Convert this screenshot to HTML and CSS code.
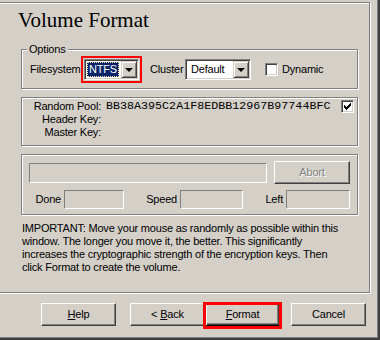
FILE: index.html
```html
<!DOCTYPE html>
<html>
<head>
<meta charset="utf-8">
<link rel="stylesheet" href="styles.css">
</head>
<body>
<div class="window">
  <div class="frame">
    <h1 class="title">Volume Format</h1>

    <div class="group options">
      <span class="legend">Options</span>
      <div class="opt-row">
        <span class="lbl lbl-fs">Filesystem</span>
        <span class="hl">
          <span class="combo combo-fs">
            <span class="combo-val sel"><span class="focus">NTFS</span></span>
            <span class="drop"><span class="tri"></span></span>
          </span>
        </span>
        <span class="lbl lbl-cl">Cluster</span>
        <span class="combo combo-cl">
          <span class="combo-val">Default</span>
          <span class="drop"><span class="tri"></span></span>
        </span>
        <span class="chk chk-dyn"></span>
        <span class="lbl lbl-dyn">Dynamic</span>
      </div>
    </div>

    <div class="group pool">
      <span class="k">Random Pool:</span>
      <span class="v">BB38A395C2A1F8EDBB12967B97744BFC</span>
      <span class="chk chk-on"><svg width="7" height="7" viewBox="0 0 7 7"><path d="M0 2h1v1h1v1h1V3h1V2h1V1h1V0h1v3H6v1H5v1H4v1H3v1H2V6H1V5H0z" fill="#000"/></svg></span>
      <span class="k">Header Key:</span>
      <span class="v"></span>
      <span></span>
      <span class="k">Master Key:</span>
      <span class="v"></span>
      <span></span>
    </div>

    <div class="group progress">
      <div class="prog-row">
        <span class="bar"></span>
        <span class="btn btn-abort"><span>Abort</span></span>
      </div>
      <div class="stat-row">
        <span class="slbl s1">Done</span><span class="field f1"></span>
        <span class="slbl s2">Speed</span><span class="field f2"></span>
        <span class="slbl s3">Left</span><span class="field f3"></span>
      </div>
    </div>

    <p class="note">IMPORTANT: Move your mouse as randomly as possible within this<br>window. The longer you move it, the better. This significantly<br>increases the cryptographic strength of the encryption keys. Then<br>click Format to create the volume.</p>
  </div>

  <div class="buttons">
    <span class="btn b-help"><span><u>H</u>elp</span></span>
    <span class="btn b-back"><span>&lt; <u>B</u>ack</span></span>
    <span class="hl hl-btn"><span class="btn b-format default"><span><u>F</u>ormat</span></span></span>
    <span class="btn b-cancel"><span>Cancel</span></span>
  </div>
</div>
</body>
</html>
```

FILE: styles.css
```css
html, body {
  margin: 0;
  padding: 0;
  background: #d4d0c8;
}
body {
  font-family: "Liberation Sans", Arial, sans-serif;
  font-size: 11px;
  line-height: 13px;
  letter-spacing: -0.2px;
  color: #000;
}
.window {
  width: 380px;
  height: 340px;
  overflow: hidden;
  box-sizing: border-box;
  box-shadow: inset -2px -2px 0 #404040, inset -3px -3px 0 #808080;
  display: flex;
  flex-direction: column;
}
.frame {
  margin: 2px 0 0 -2px;
  width: 372px;
  height: 291px;
  box-sizing: border-box;
  border: 1px solid #808080;
  box-shadow: inset 1px 1px 0 #fff, 1px 1px 0 #fff;
  display: flex;
  flex-direction: column;
  flex: none;
}
.title {
  margin: 5px 0 0 19px;
  font-family: "Liberation Serif", "Times New Roman", serif;
  font-weight: normal;
  font-size: 21px;
  line-height: 24px;
  height: 24px;
  letter-spacing: 0;
}
.group {
  position: relative;
  width: 337px;
  margin-left: 22px;
  box-sizing: border-box;
  border: 1px solid #808080;
  box-shadow: inset 1px 1px 0 #fff, 1px 1px 0 #fff;
  flex: none;
}
.legend {
  position: absolute;
  left: 5px;
  top: -7px;
  padding: 0 2px;
  background: #d4d0c8;
}
.options {
  margin-top: 17px;
  height: 40px;
  padding: 9px 0 0 8px;
}
.opt-row {
  display: flex;
  align-items: center;
  height: 21px;
}
.lbl-fs { width: 54px; }
.lbl-cl { width: 35px; margin-left: 11px; }
.lbl-dyn { margin-left: 4px; }
.hl {
  position: relative;
  display: block;
}
.hl::after {
  content: "";
  position: absolute;
  left: -3px;
  top: -3px;
  right: -3px;
  bottom: -3px;
  border: 2px solid #f00;
  pointer-events: none;
}
.combo {
  display: flex;
  box-sizing: border-box;
  height: 21px;
  background: #fff;
  border: 1px solid;
  border-color: #808080 #fff #fff #808080;
  box-shadow: inset 1px 1px 0 #404040, inset -1px -1px 0 #d4d0c8;
  padding: 1px;
}
.combo-fs { width: 55px; }
.combo-cl { width: 66px; }
.combo-val {
  flex: 1;
  padding-left: 4px;
  line-height: 17px;
}
.combo-val.sel {
  padding: 1px 2px 1px 1px;
}
.focus {
  display: block;
  height: 15px;
  box-sizing: border-box;
  background: #0a246a;
  color: #fff;
  border: 1px dotted #f2e9a8;
  line-height: 13px;
  padding-left: 1px;
}
.drop {
  width: 16px;
  height: 17px;
  box-sizing: border-box;
  background: #d4d0c8;
  border: 1px solid;
  border-color: #d4d0c8 #404040 #404040 #d4d0c8;
  box-shadow: inset 1px 1px 0 #fff, inset -1px -1px 0 #808080;
  display: flex;
  align-items: center;
  justify-content: center;
}
.tri {
  width: 0;
  height: 0;
  border-left: 4px solid transparent;
  border-right: 4px solid transparent;
  border-top: 4px solid #000;
  margin-left: -1px;
}
.chk {
  display: flex;
  align-items: center;
  justify-content: center;
  width: 13px;
  height: 13px;
  box-sizing: border-box;
  background: #fff;
  border: 1px solid;
  border-color: #808080 #fff #fff #808080;
  box-shadow: inset 1px 1px 0 #404040, inset -1px -1px 0 #d4d0c8;
}
.chk-dyn { margin-left: 14px; }
.chk svg { display: block; }
.pool {
  margin-top: 8px;
  height: 49px;
  padding: 2px 3px 0 0;
  display: grid;
  grid-template-columns: 79px 1fr 13px;
  grid-auto-rows: 13px;
  column-gap: 5px;
  align-content: start;
}
.k {
  text-align: right;
  white-space: nowrap;
}
.v {
  font-family: "Liberation Mono", "Courier New", monospace;
  font-size: 11.7px;
  letter-spacing: 0;
  white-space: nowrap;
}
.progress {
  margin-top: 8px;
  height: 61px;
  padding: 6px 7px 0 7px;
}
.prog-row {
  display: flex;
  align-items: center;
  justify-content: space-between;
  height: 23px;
}
.bar {
  width: 238px;
  height: 20px;
  box-sizing: border-box;
  border: 1px solid;
  border-color: #808080 #fff #fff #808080;
}
.stat-row {
  display: flex;
  align-items: center;
  margin-top: 6px;
  height: 19px;
}
.slbl {
  text-align: right;
  margin-right: 3px;
}
.s1 { width: 32px; }
.s2 { width: 53px; }
.s3 { width: 40px; }
.field {
  height: 19px;
  box-sizing: border-box;
  border: 1px solid;
  border-color: #808080 #fff #fff #808080;
}
.f1 { width: 60px; }
.f2 { width: 63px; }
.f3 { width: 64px; }
.btn {
  display: flex;
  align-items: center;
  justify-content: center;
  box-sizing: border-box;
  width: 75px;
  height: 23px;
  border: 1px solid;
  border-color: #fff #404040 #404040 #fff;
  box-shadow: inset -1px -1px 0 #808080;
  background: #d4d0c8;
  white-space: pre;
}
.btn-abort {
  width: 76px;
  color: #808080;
  text-shadow: 1px 1px 0 #fff;
}
.note {
  margin: 7px 0 0 23px;
  line-height: 13px;
}
.buttons {
  display: flex;
  margin-top: 10px;
  padding-left: 41px;
  height: 24px;
}
.b-back { margin-left: 14px; }
.b-cancel { margin-left: 11px; }
.default {
  border: 1px solid #000;
  box-shadow: inset 1px 1px 0 #fff, inset -1px -1px 0 #404040, inset -2px -2px 0 #808080;
}
.hl-btn::after {
  left: -2px;
  top: -1px;
  right: -2px;
  bottom: -2px;
  border-width: 3px;
}
u { text-decoration: underline; text-underline-offset: 1px; }
```
